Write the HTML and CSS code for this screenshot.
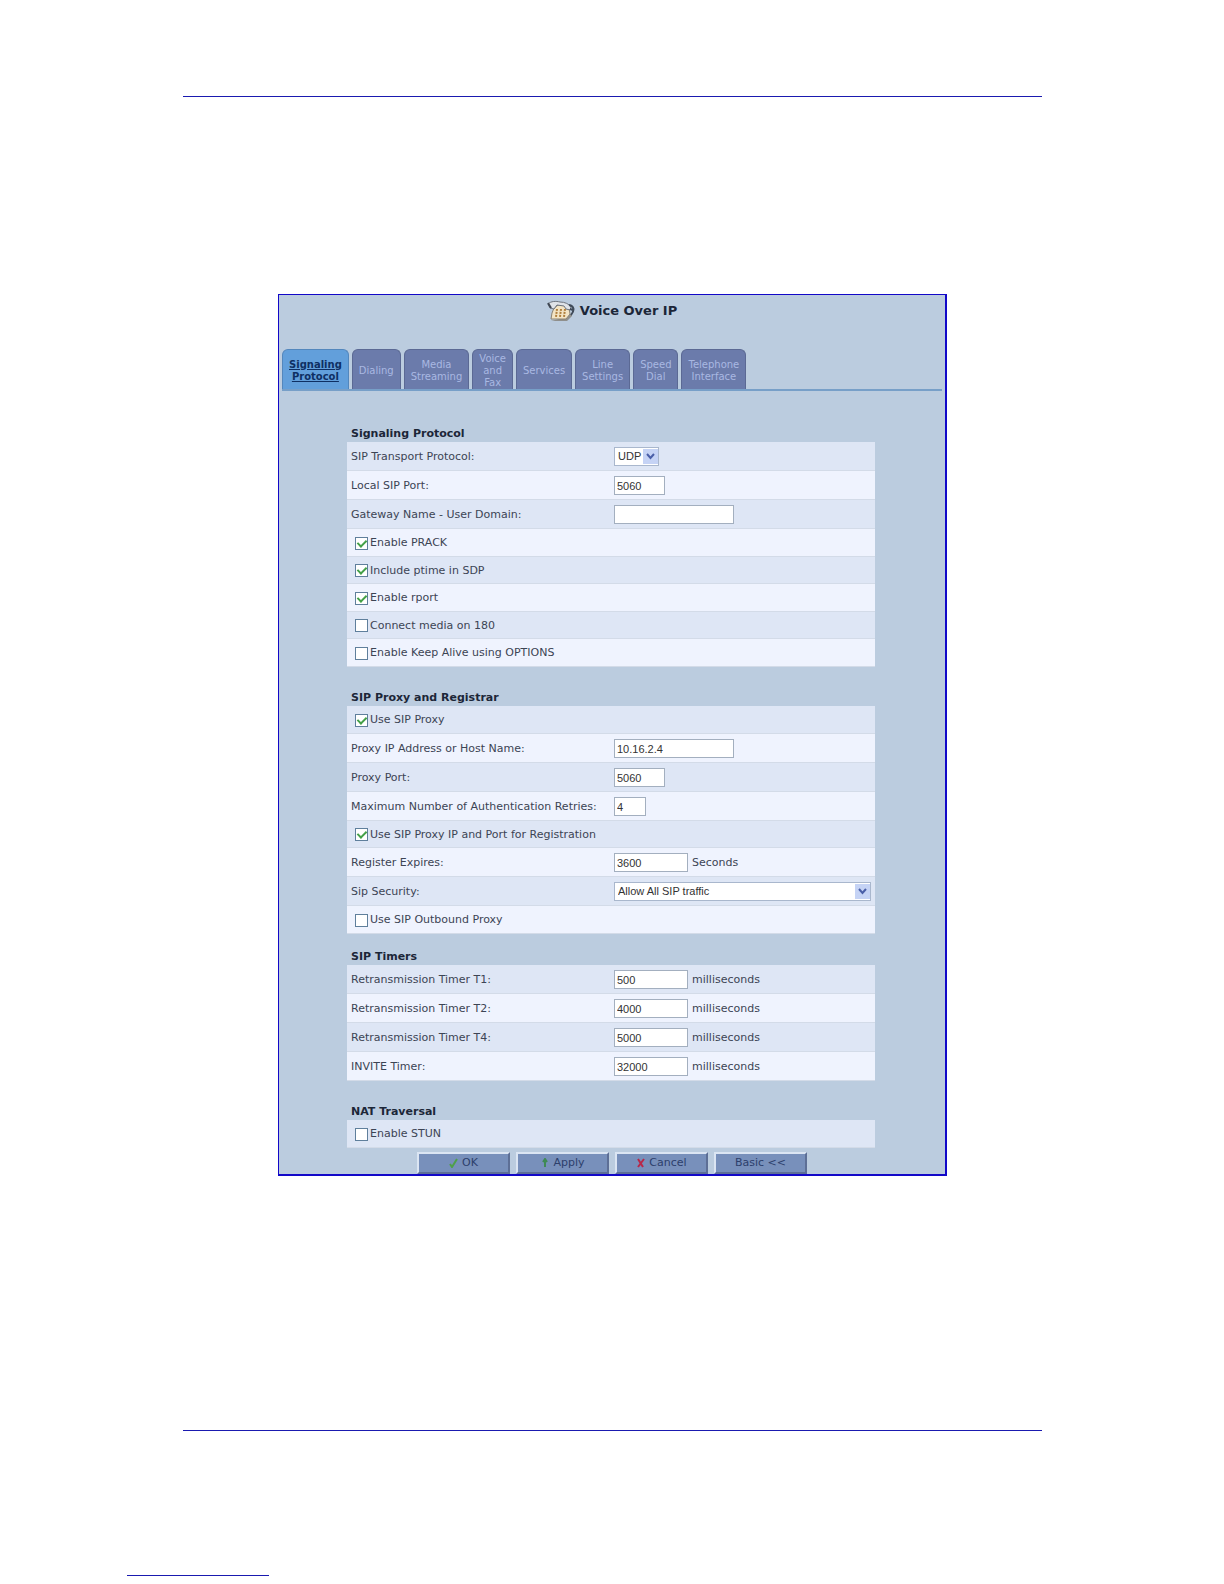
FILE: index.html
```html
<!doctype html>
<html lang="en">
<head>
<meta charset="utf-8">
<title>Voice Over IP</title>
<link rel="stylesheet" href="styles.css">
</head>

<body>
<div class="sheet">
	<form class="panel">
		<h1>
			<svg class="phone" viewBox="0 0 28 22" width="28" height="22" aria-hidden="true">
				<path d="M4 21h16l5-5v-3l-5 4z" fill="#8f8f8c"/>
				<path d="M7 8l4-3h8l3 3 1 6-4 5H4l1-6z" fill="#f3e4c4" stroke="#8c8271"/>
				<path d="M1 4c3-3 8-3 12-2 5 0 9 2 11 5l-1 3-4-1-2-3-7-1-3 4-4-1z" fill="#dfe3e8" stroke="#6d747e"/>
				<path d="M1 3l3 5" stroke="#3f4754" stroke-width="2"/>
				<path d="M22 5c5 1 6 5 2 10M23 9l3 1" fill="none" stroke="#3f4a59" stroke-width="2"/>
				<path d="M10 9l-1 8M14 9l-1 8M18 9l-1 8" stroke="#b07f3c" stroke-width="2" stroke-dasharray="2 1"/>
			</svg>
			Voice Over IP
		</h1>
		<nav class="tabs">
			<a href="#signaling" class="active">Signaling<br>Protocol</a>
			<a href="#dialing">Dialing</a>
			<a href="#media">Media<br>Streaming</a>
			<a href="#fax">Voice<br>and<br>Fax</a>
			<a href="#services">Services</a>
			<a href="#line">Line<br>Settings</a>
			<a href="#speed">Speed<br>Dial</a>
			<a href="#phone">Telephone<br>Interface</a>
		</nav>

		<div class="content">
			<h2>Signaling Protocol</h2>
			<table>
				<colgroup><col class="name"><col></colgroup>
				<tr>
					<th><label for="transport">SIP Transport Protocol:</label></th>
					<td><span class="select"><select id="transport"><option>UDP</option><option>TCP</option></select><svg viewBox="0 0 15 15" width="15" height="15" aria-hidden="true"><path d="M4 5l3.500 4L11 5" fill="none" stroke="#4a5fa8" stroke-width="2"/></svg></span></td>
				</tr>
				<tr>
					<th><label for="sip-port">Local SIP Port:</label></th>
					<td><input type="text" id="sip-port" class="port" value="5060"></td>
				</tr>
				<tr>
					<th><label for="domain">Gateway Name - User Domain:</label></th>
					<td><input type="text" id="domain" class="host"></td>
				</tr>
				<tr class="check"><td colspan="2"><label><input type="checkbox" checked>Enable PRACK</label></td></tr>
				<tr class="check"><td colspan="2"><label><input type="checkbox" checked>Include ptime in SDP</label></td></tr>
				<tr class="check"><td colspan="2"><label><input type="checkbox" checked>Enable rport</label></td></tr>
				<tr class="check"><td colspan="2"><label><input type="checkbox">Connect media on 180</label></td></tr>
				<tr class="check"><td colspan="2"><label><input type="checkbox">Enable Keep Alive using OPTIONS</label></td></tr>
			</table>

			<h2>SIP Proxy and Registrar</h2>
			<table>
				<colgroup><col class="name"><col></colgroup>
				<tr class="check"><td colspan="2"><label><input type="checkbox" checked>Use SIP Proxy</label></td></tr>
				<tr>
					<th><label for="proxy-host">Proxy IP Address or Host Name:</label></th>
					<td><input type="text" id="proxy-host" class="host" value="10.16.2.4"></td>
				</tr>
				<tr>
					<th><label for="proxy-port">Proxy Port:</label></th>
					<td><input type="text" id="proxy-port" class="port" value="5060"></td>
				</tr>
				<tr>
					<th><label for="retries">Maximum Number of Authentication Retries:</label></th>
					<td><input type="text" id="retries" class="count" value="4"></td>
				</tr>
				<tr class="check"><td colspan="2"><label><input type="checkbox" checked>Use SIP Proxy IP and Port for Registration</label></td></tr>
				<tr>
					<th><label for="expires">Register Expires:</label></th>
					<td><input type="text" id="expires" class="time" value="3600"><span class="unit">Seconds</span></td>
				</tr>
				<tr>
					<th><label for="security">Sip Security:</label></th>
					<td><span class="select wide"><select id="security"><option>Allow All SIP traffic</option></select><svg viewBox="0 0 15 15" width="15" height="15" aria-hidden="true"><path d="M4 5l3.500 4L11 5" fill="none" stroke="#4a5fa8" stroke-width="2"/></svg></span></td>
				</tr>
				<tr class="check"><td colspan="2"><label><input type="checkbox">Use SIP Outbound Proxy</label></td></tr>
			</table>

			<h2 class="near">SIP Timers</h2>
			<table>
				<colgroup><col class="name"><col></colgroup>
				<tr>
					<th><label for="t1">Retransmission Timer T1:</label></th>
					<td><input type="text" id="t1" class="time" value="500"><span class="unit">milliseconds</span></td>
				</tr>
				<tr>
					<th><label for="t2">Retransmission Timer T2:</label></th>
					<td><input type="text" id="t2" class="time" value="4000"><span class="unit">milliseconds</span></td>
				</tr>
				<tr>
					<th><label for="t4">Retransmission Timer T4:</label></th>
					<td><input type="text" id="t4" class="time" value="5000"><span class="unit">milliseconds</span></td>
				</tr>
				<tr>
					<th><label for="invite">INVITE Timer:</label></th>
					<td><input type="text" id="invite" class="time" value="32000"><span class="unit">milliseconds</span></td>
				</tr>
			</table>

			<h2>NAT Traversal</h2>
			<table>
				<tr class="check"><td colspan="2"><label><input type="checkbox">Enable STUN</label></td></tr>
			</table>
		</div>

		<div class="buttons">
			<button type="button"><svg viewBox="0 0 10 10" width="10" height="10" aria-hidden="true"><path d="M1 6l2 3L8 1" fill="none" stroke="#4fa04a" stroke-width="2"/></svg>OK</button>
			<button type="button"><svg viewBox="0 0 10 10" width="10" height="10" aria-hidden="true"><path d="M5 9V3M3 4l2-3 2 3" fill="none" stroke="#3f8a55" stroke-width="2"/></svg>Apply</button>
			<button type="button"><svg viewBox="0 0 10 10" width="10" height="10" aria-hidden="true"><path d="M2 1l5 8M8 1L2 9" fill="none" stroke="#b8284a" stroke-width="2"/></svg>Cancel</button>
			<button type="button">Basic &lt;&lt;</button>
		</div>
	</form>
</div>
<div class="footnote"></div>
</body>
</html>
```
FILE: styles.css
```css
*{ margin:0; padding:0; box-sizing:border-box;}
body{ background:#fff; font:11px/14px "DejaVu Sans",Verdana,sans-serif; color:#3c4454;}

.sheet{ margin:96px 182px 0 183px; padding:197px 95px 254px; border-top:1px solid #1a1ab0; border-bottom:1px solid #1a1ab0;}
.footnote{ width:142px; margin:144px 0 8px 127px; border-top:1px solid #1a1ab0;}

.panel{ background:#bbccdf; border:1px solid #1208c8; border-width:1px 2px 2px 1px;}
h1{ display:flex; justify-content:center; align-items:center; gap:5px; height:32px; font-size:13px; line-height:16px; color:#1c2638;}

/* tabs */
.tabs{ display:flex; gap:3px; margin:22px 3px 0; border-bottom:2px solid #779fc8;}
.tabs a{ display:flex; align-items:center; height:40px; padding:2px 6px 0; border:1px solid #5b6994; border-bottom:0; border-radius:6px 6px 0 0; background:#6b7bab; color:#a9b8e2; font-size:10px; line-height:12px; text-align:center; text-decoration:none;}
.tabs a.active{ background:#629fdb; border-color:#5387bd; color:#0e2f63; font-weight:bold; text-decoration:underline;}

/* settings */
.content{ padding:34px 70px 0 68px;}
h2{ margin-top:22px; padding-left:4px; font-size:11px; line-height:17px; color:#1c2638;}
h2:first-child{ margin-top:0;}
h2.near{ margin-top:14px;}
table{ width:100%; border-collapse:collapse; table-layout:fixed;}
col.name{ width:267px;}
tr{ height:29px; background:#dee6f5;}
tr:nth-child(even){ background:#eff3fe;}
tr.check{ height:27px;}
tr.check:first-child,tr.check:nth-child(even){ height:28px;}
th{ padding-left:4px; font-weight:normal; text-align:left; white-space:nowrap;}
th,td{ vertical-align:middle; box-shadow:inset 0 -1px #d3dbe8;}
.check label{ display:flex; align-items:center; gap:2px; padding-left:8px;}

input,select{ font:11px/15px "Liberation Sans",Arial,sans-serif; color:#333;}
input[type=text]{ display:inline-block; height:19px; padding:0 2px; border:1px solid #a3afbf; background:#fff; vertical-align:middle;}
input.port{ width:51px;}
input.host{ width:120px;}
input.count{ width:32px;}
input.time{ width:74px;}
.unit{ margin-left:4px; vertical-align:middle;}

input[type=checkbox]{ appearance:none; display:grid; place-items:center; width:13px; height:13px; border:1px solid #5f7f9c; background:#fff;}
input[type=checkbox]:checked::before{ content:""; width:4px; height:7px; margin-bottom:2px; border:solid #43a047; border-width:0 2px 2px 0; transform:rotate(45deg);}

.select{ display:inline-block; position:relative; vertical-align:middle;}
.select select{ appearance:none; display:block; width:100%; height:19px; padding:0 16px 0 3px; border:1px solid #a9b7cd; border-radius:0; background:#fff;}
.select svg{ position:absolute; top:2px; right:1px; background:#c5d3f5; pointer-events:none;}
.select.wide{ display:block; margin-right:4px;}

/* buttons */
.buttons{ display:flex; justify-content:center; gap:6px; padding-top:4px;}
button{ display:flex; justify-content:center; align-items:center; gap:3px; width:93px; height:22px; border:2px solid; border-color:#dbe5f3 #5d6f96 #5d6f96 #dbe5f3; background:#7890bb; font:11px/14px "DejaVu Sans",Verdana,sans-serif; color:#2d3f6c;}
```
